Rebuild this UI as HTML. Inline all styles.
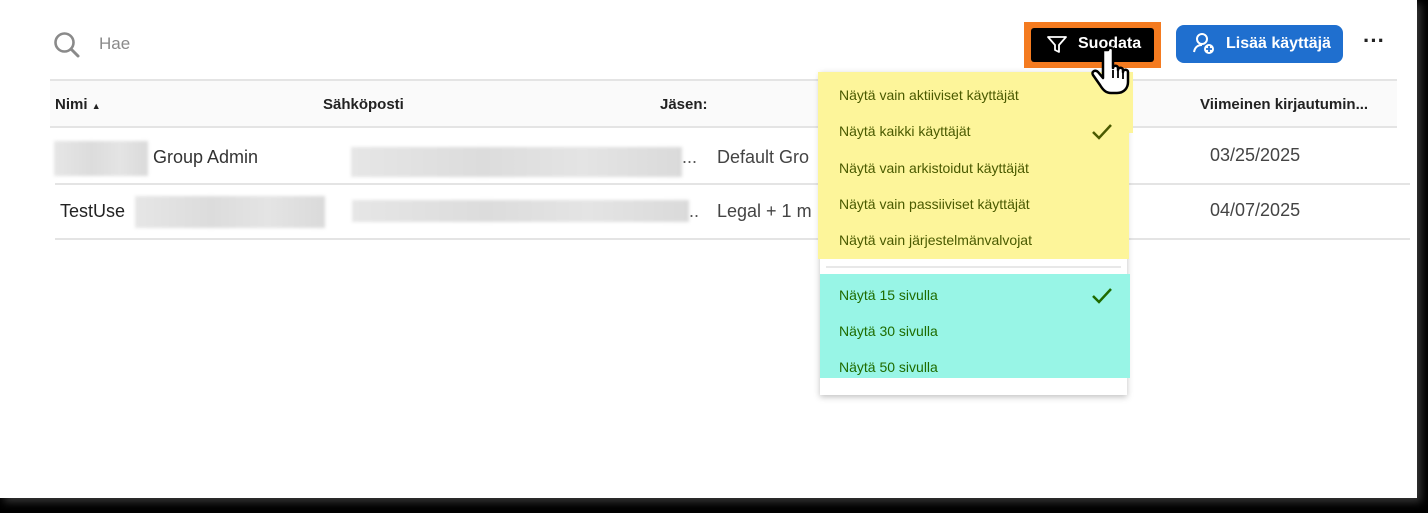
<!DOCTYPE html>
<html><head><meta charset="utf-8"><style>
*{margin:0;padding:0;box-sizing:border-box}
body{width:1428px;height:513px;background:#000;position:relative;overflow:hidden;font-family:"Liberation Sans",sans-serif}
#pg{position:absolute;left:0;top:0;width:1417px;height:498px;background:#fff;box-shadow:4px 4px 8px rgba(60,60,60,.9)}
.a{position:absolute}
.t{position:absolute;white-space:nowrap}
.line{position:absolute;height:2px;background:#e4e4e4}
.blur{position:absolute;background:linear-gradient(90deg,#e6e6e6,#dcdcdc 40%,#e4e4e4 70%,#dadada);filter:blur(1.5px)}
.mi{position:absolute;left:839px;font-size:14px;color:#4a5a00;white-space:nowrap}
.mc{position:absolute;left:839px;font-size:14px;color:#1f6b00;white-space:nowrap}
</style></head><body>
<div id="pg">
<svg class="a" style="left:53px;top:31px" width="28" height="28" viewBox="0 0 28 28"><circle cx="11.5" cy="11.5" r="9" fill="none" stroke="#8a8a8a" stroke-width="2.6"/><line x1="18" y1="18" x2="25" y2="25" stroke="#8a8a8a" stroke-width="3" stroke-linecap="round"/></svg>
<div class="t" style="left:99px;top:34px;font-size:17px;color:#8a8a8a">Hae</div>

<div class="a" style="left:1024px;top:22px;width:137px;height:46px;background:#f47b20"></div>
<div class="a" style="left:1031px;top:28px;width:123px;height:34px;background:#000;border-radius:3px"></div>
<svg class="a" style="left:1046px;top:35px" width="22" height="20" viewBox="0 0 22 20"><path d="M2 2h18l-7 8v7l-4-2v-5z" fill="none" stroke="#fff" stroke-width="1.8" stroke-linejoin="round"/></svg>
<div class="t" style="left:1078px;top:35px;font-size:16px;color:#fff;font-weight:bold">Suodata</div>

<div class="a" style="left:1176px;top:25px;width:167px;height:38px;background:#1f6fcf;border-radius:8px"></div>
<svg class="a" style="left:1192px;top:32px" width="26" height="24" viewBox="0 0 26 24"><circle cx="10" cy="7" r="5" fill="none" stroke="#fff" stroke-width="2"/><path d="M2 20c1-5 4-7 8-7" fill="none" stroke="#fff" stroke-width="2"/><circle cx="17" cy="17" r="5" fill="#fff"/><path d="M17 14v6M14 17h6" stroke="#1f6fcf" stroke-width="1.8"/></svg>
<div class="t" style="left:1226px;top:35px;font-size:16px;color:#fff;font-weight:bold">Lisää käyttäjä</div>
<div class="t" style="left:1363px;top:28px;font-size:22px;color:#222;font-weight:bold;letter-spacing:0px">···</div>

<div class="a" style="left:50px;top:80px;width:1347px;height:47px;background:#fafafa"></div>
<div class="line" style="left:50px;top:79px;width:1347px"></div>
<div class="line" style="left:50px;top:126px;width:1347px"></div>
<div class="t" style="left:55px;top:96px;font-size:15px;color:#222;font-weight:bold">Nimi <span style="font-size:9px">▲</span></div>
<div class="t" style="left:323px;top:96px;font-size:15px;color:#222;font-weight:bold">Sähköposti</div>
<div class="t" style="left:660px;top:96px;font-size:15px;color:#222;font-weight:bold">Jäsen:</div>
<div class="t" style="left:1200px;top:96px;font-size:15px;color:#222;font-weight:bold">Viimeinen kirjautumin...</div>

<div class="blur" style="left:54px;top:141px;width:94px;height:35px"></div>
<div class="t" style="left:153px;top:147px;font-size:18px;color:#333">Group Admin</div>
<div class="blur" style="left:351px;top:147px;width:331px;height:30px"></div>
<div class="t" style="left:682px;top:147px;font-size:18px;color:#555">...</div>
<div class="t" style="left:717px;top:147px;font-size:18px;color:#444">Default Gro</div>
<div class="t" style="left:1210px;top:145px;font-size:18px;color:#444">03/25/2025</div>
<div class="line" style="left:55px;top:183px;width:1355px"></div>

<div class="t" style="left:60px;top:201px;font-size:18px;color:#222">TestUse</div>
<div class="blur" style="left:135px;top:196px;width:190px;height:32px"></div>
<div class="blur" style="left:352px;top:200px;width:337px;height:22px"></div>
<div class="t" style="left:689px;top:201px;font-size:18px;color:#555">..</div>
<div class="t" style="left:717px;top:201px;font-size:18px;color:#444">Legal + 1 m</div>
<div class="t" style="left:1210px;top:200px;font-size:18px;color:#444">04/07/2025</div>
<div class="line" style="left:55px;top:238px;width:1355px"></div>

<div class="a" style="left:820px;top:72px;width:307px;height:323px;background:#fff;box-shadow:0 2px 6px rgba(0,0,0,.25)"></div>
<div class="a" style="left:818px;top:72px;width:315px;height:61px;background:#fdf59a"></div>
<div class="a" style="left:818px;top:133px;width:311px;height:126px;background:#fdf59a"></div>
<div class="a" style="left:826px;top:266px;width:295px;height:2px;background:#e8e8e8"></div>
<div class="a" style="left:820px;top:274px;width:310px;height:104px;background:#98f5e6"></div>
<div class="mi" style="top:87px">Näytä vain aktiiviset käyttäjät</div>
<div class="mi" style="top:123px">Näytä kaikki käyttäjät</div>
<div class="mi" style="top:160px">Näytä vain arkistoidut käyttäjät</div>
<div class="mi" style="top:196px">Näytä vain passiiviset käyttäjät</div>
<div class="mi" style="top:232px">Näytä vain järjestelmänvalvojat</div>
<div class="mc" style="top:287px">Näytä 15 sivulla</div>
<div class="mc" style="top:323px">Näytä 30 sivulla</div>
<div class="mc" style="top:359px">Näytä 50 sivulla</div>
<svg class="a" style="left:1091px;top:123px" width="22" height="18" viewBox="0 0 22 18"><path d="M2 9l6 6L20 2" fill="none" stroke="#4a5a00" stroke-width="2.5"/></svg>
<svg class="a" style="left:1091px;top:287px" width="22" height="18" viewBox="0 0 22 18"><path d="M2 9l6 6L20 2" fill="none" stroke="#1f6b00" stroke-width="2.5"/></svg>

<svg class="a" style="left:1090px;top:44px" width="50" height="52" viewBox="0 0 50 52"><path d="M18 6c0-3 5-3 5 0v18c0-3 5-3 5 0v2c0-3 5-3 5 0v2c0-3 5-3 5 0v10c0 6-4 11-11 11h-6c-5 0-8-3-11-8l-7-10c-2-3 2-6 5-3l5 6V6z" fill="#fff" stroke="#000" stroke-width="2.5" stroke-linejoin="round"/><path d="M23 26v8M28 27v7M33 29v6" stroke="#000" stroke-width="1.8"/></svg>
</div>
</body></html>
